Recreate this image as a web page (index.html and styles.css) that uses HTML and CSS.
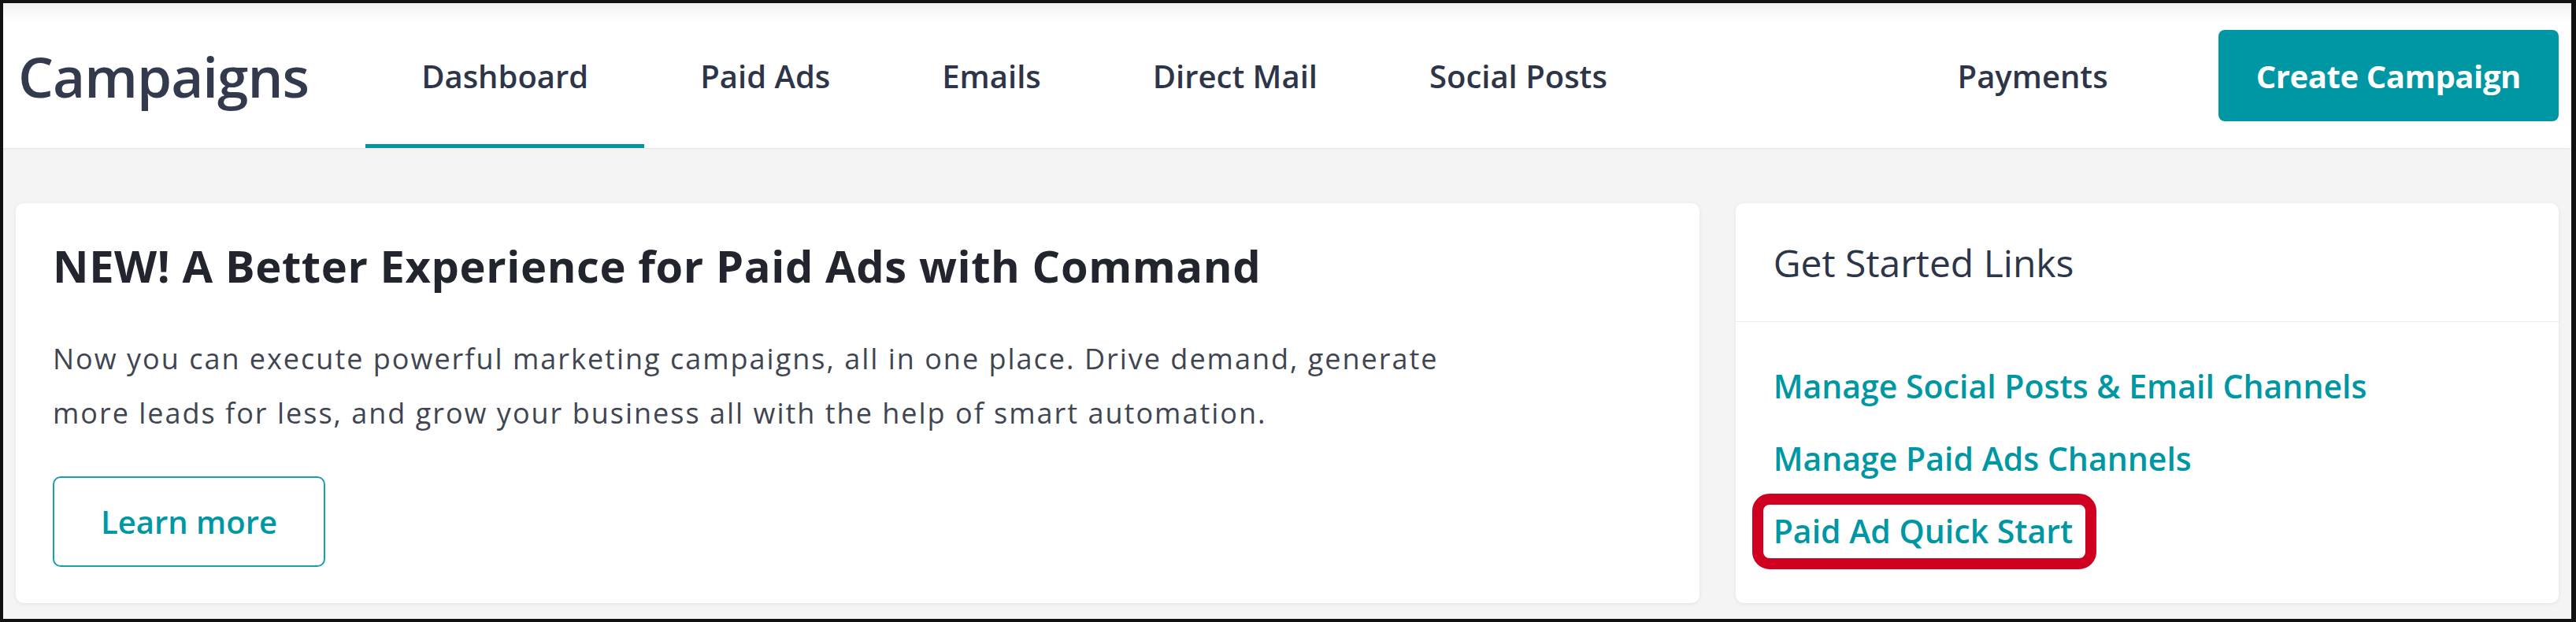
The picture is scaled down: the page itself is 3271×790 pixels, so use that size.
FILE: index.html
```html
<!DOCTYPE html>
<html lang="en">
<head>
<meta charset="utf-8">
<title>Campaigns</title>
<link rel="stylesheet" href="styles.css">
</head>
<body>
<div class="frame">
  <header class="topbar">
    <h1 class="title">Campaigns</h1>
    <nav class="tabs">
      <a class="tab active" href="#">Dashboard</a>
      <a class="tab" href="#">Paid Ads</a>
      <a class="tab" href="#">Emails</a>
      <a class="tab" href="#">Direct Mail</a>
      <a class="tab" href="#">Social Posts</a>
      <a class="tab tab-right" href="#">Payments</a>
    </nav>
    <button class="btn-primary" type="button">Create Campaign</button>
  </header>
  <main class="content">
    <section class="card promo">
      <h2 class="promo-title">NEW! A Better Experience for Paid Ads with Command</h2>
      <p class="promo-text">Now you can execute powerful marketing campaigns, all in one place. Drive demand, generate<br>more leads for less, and grow your business all with the help of smart automation.</p>
      <button class="btn-outline" type="button">Learn more</button>
    </section>
    <aside class="card links">
      <div class="links-head">Get Started Links</div>
      <div class="links-body">
        <div class="link-row"><a class="link" href="#">Manage Social Posts &amp; Email Channels</a></div>
        <div class="link-row"><a class="link" href="#">Manage Paid Ads Channels</a></div>
        <div class="link-row"><a class="link highlighted" href="#">Paid Ad Quick Start</a></div>
      </div>
    </aside>
  </main>
</div>
</body>
</html>
```

FILE: styles.css
```css
* { box-sizing: border-box; }
html, body { margin: 0; padding: 0; }
body {
  font-family: "Open Sans", "Liberation Sans", sans-serif;
  color: #2e3548;
  background: #fff;
}
.frame {
  width: 3271px;
  height: 790px;
  border: 4px solid #111;
  border-right-width: 6px;
  background: #f4f4f5;
  display: flex;
  flex-direction: column;
  overflow: hidden;
}
.topbar {
  height: 184px;
  flex: none;
  display: flex;
  align-items: stretch;
  padding: 0 16px 0 19px;
  background: linear-gradient(#f1f1f2 0, #ffffff 24px);
  box-shadow: 0 1px 2px rgba(0,0,0,0.07);
  position: relative;
  z-index: 1;
}
.title {
  margin: 0;
  align-self: center;
  font-size: 71px;
  font-weight: 600;
  color: #333a4e;
  letter-spacing: -1px;
  line-height: 1;
}
.tabs {
  display: flex;
  flex: 1;
  margin-left: 72px;
}
.tab {
  display: flex;
  align-items: center;
  padding: 5px 71px 0 71px;
  font-size: 40px;
  font-weight: 600;
  color: #2e3548;
  text-decoration: none;
  border-bottom: 5px solid transparent;
}
.tab.active { border-bottom-color: #0097a4; }
.tab-right { margin-left: auto; }
.btn-primary {
  align-self: center;
  height: 116px;
  margin-left: 69px;
  padding: 0 48px;
  border: 0;
  border-radius: 8px;
  background: #0097a4;
  color: #fff;
  font-family: inherit;
  font-size: 40px;
  font-weight: 700;
  letter-spacing: -0.4px;
}
.content {
  flex: 1;
  display: grid;
  grid-template-columns: 2137fr 1045fr;
  column-gap: 46px;
  padding: 70px 16px 20px 16px;
}
.card {
  background: #fff;
  border-radius: 10px;
  box-shadow: 0 1px 5px rgba(0,0,0,0.08);
}
.promo {
  padding: 46px 47px 0 47px;
}
.promo-title {
  margin: 0;
  font-size: 56px;
  line-height: 67px;
  font-weight: 700;
  letter-spacing: 0.6px;
  color: #22252e;
}
.promo-text {
  margin: 50px 0 0 0;
  font-size: 36px;
  line-height: 69px;
  letter-spacing: 2px;
  color: #404552;
}
.btn-outline {
  margin-top: 46px;
  width: 346px;
  height: 115px;
  background: #fff;
  border: 2px solid #1a9ea9;
  border-radius: 10px;
  color: #0097a4;
  font-family: inherit;
  font-size: 40px;
  font-weight: 600;
}
.links-head {
  height: 151px;
  display: flex;
  align-items: center;
  padding: 0 48px;
  font-size: 48px;
  font-weight: 500;
  color: #2e3548;
  border-bottom: 1px solid #ececee;
}
.links-body {
  padding: 35px 48px 0 48px;
}
.link-row {
  line-height: 92px;
  font-size: 41px;
}
.link {
  color: #0097a4;
  font-weight: 600;
  text-decoration: none;
}
.highlighted {
  position: relative;
  display: inline-block;
}
.highlighted::after {
  content: "";
  position: absolute;
  top: -1px;
  bottom: -3px;
  left: -27px;
  right: -30px;
  border: 14px solid #cf0020;
  border-radius: 22px;
}
```
